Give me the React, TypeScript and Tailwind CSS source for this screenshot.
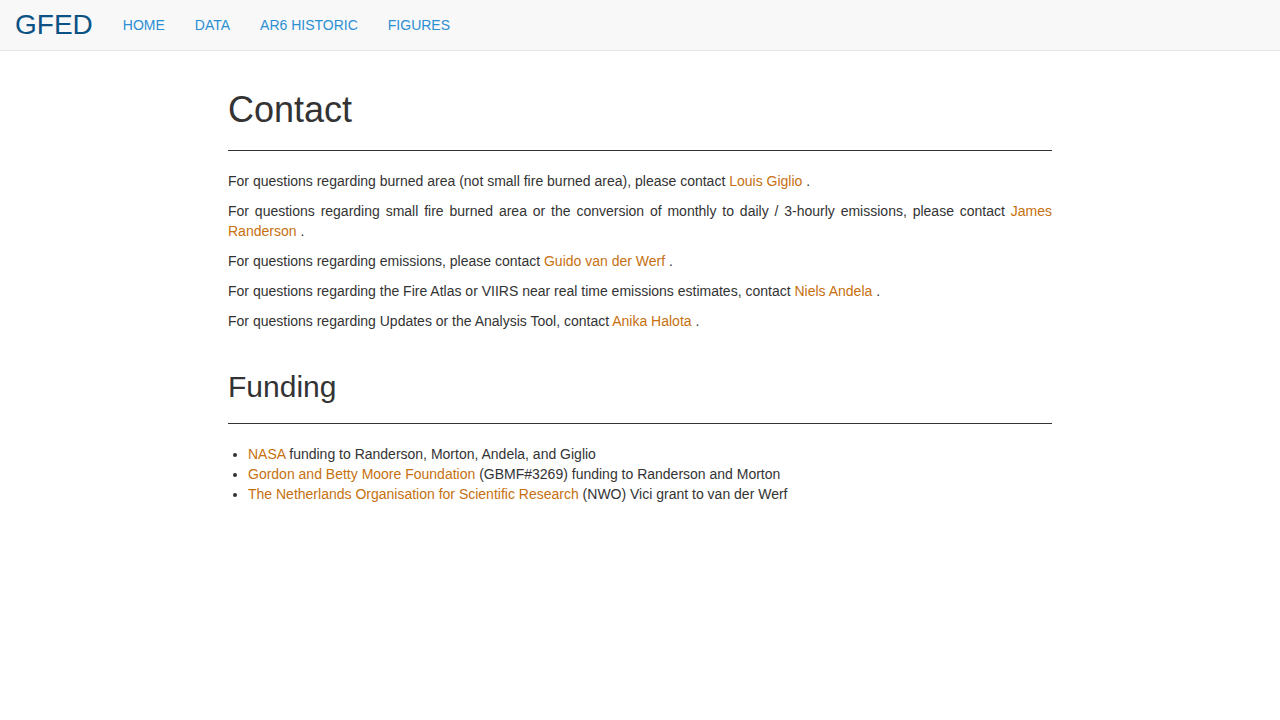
const link = "text-[#c6700f]";

function Dot() {
  return <span> .</span>;
}

export default function App() {
  return (
    <div className="min-h-screen bg-white font-['Liberation_Sans',Arial,sans-serif] text-[14px] leading-[20px] text-[#333]">
      <nav className="flex h-[51px] items-center border-b border-[#e7e7e7] bg-[#f8f8f8]">
        <a className="px-[15px] text-[28px] leading-[50px] text-[#0b5385]">GFED</a>
        <ul className="flex">
          {["HOME", "DATA", "AR6 HISTORIC", "FIGURES"].map((t) => (
            <li key={t}>
              <a className="block px-[15px] leading-[50px] text-[#2b8fd3]">{t}</a>
            </li>
          ))}
        </ul>
      </nav>

      <div className="mx-auto w-[824px]">
        <h1 className="mt-[39px] text-[36px] leading-[40px] font-normal">Contact</h1>
        <hr className="mt-[20px] mb-[20px] border-t border-[#333]" />
        <div className="text-justify">
          <p className="mb-[10px]">
            For questions regarding burned area (not small fire burned area), please contact{" "}
            <a className={link}>Louis Giglio</a>
            <Dot />
          </p>
          <p className="mb-[10px]">
            For questions regarding small fire burned area or the conversion of monthly to daily / 3-hourly emissions, please contact{" "}
            <a className={link}>James Randerson</a>
            <Dot />
          </p>
          <p className="mb-[10px]">
            For questions regarding emissions, please contact <a className={link}>Guido van der Werf</a>
            <Dot />
          </p>
          <p className="mb-[10px]">
            For questions regarding the Fire Atlas or VIIRS near real time emissions estimates, contact{" "}
            <a className={link}>Niels Andela</a>
            <Dot />
          </p>
          <p className="mb-[10px]">
            For questions regarding Updates or the Analysis Tool, contact <a className={link}>Anika Halota</a>
            <Dot />
          </p>
        </div>

        <h2 className="mt-[39px] text-[30px] leading-[33px] font-normal">Funding</h2>
        <hr className="mt-[20px] mb-[20px] border-t border-[#333]" />
        <ul className="list-disc pl-[20px]">
          <li>
            <a className={link}>NASA</a> funding to Randerson, Morton, Andela, and Giglio
          </li>
          <li>
            <a className={link}>Gordon and Betty Moore Foundation</a> (GBMF#3269) funding to Randerson and Morton
          </li>
          <li>
            <a className={link}>The Netherlands Organisation for Scientific Research</a> (NWO) Vici grant to van der Werf
          </li>
        </ul>
      </div>
    </div>
  );
}
